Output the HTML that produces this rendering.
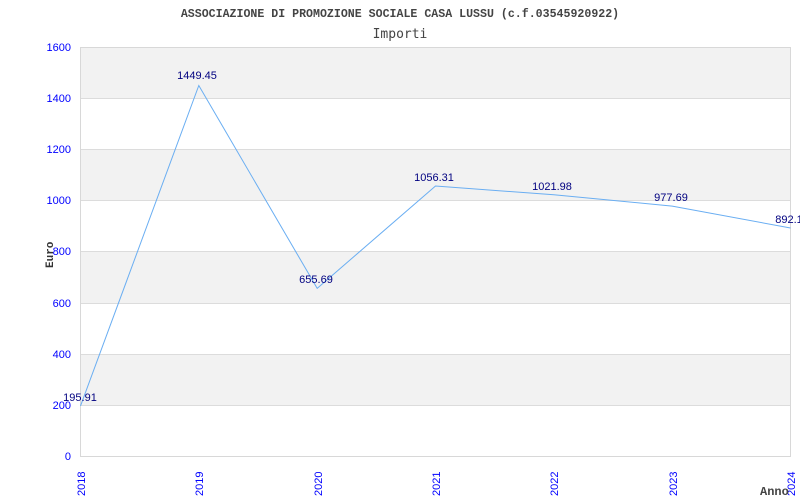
<!DOCTYPE html>
<html><head><meta charset="utf-8"><style>
html,body{margin:0;padding:0;background:#fff;width:800px;height:500px;overflow:hidden}
</style></head><body>
<svg width="800" height="500" xmlns="http://www.w3.org/2000/svg">
<rect x="0" y="0" width="800" height="500" fill="#fff"/>
<g fill="#f2f2f2">
<rect x="80.5" y="47" width="710" height="51"/>
<rect x="80.5" y="149" width="710" height="51"/>
<rect x="80.5" y="252" width="710" height="51"/>
<rect x="80.5" y="354" width="710" height="51"/>
</g>
<g stroke="#dcdcdc" stroke-width="1">
<line x1="80" y1="98.5" x2="790" y2="98.5"/>
<line x1="80" y1="149.5" x2="790" y2="149.5"/>
<line x1="80" y1="200.5" x2="790" y2="200.5"/>
<line x1="80" y1="251.5" x2="790" y2="251.5"/>
<line x1="80" y1="303.5" x2="790" y2="303.5"/>
<line x1="80" y1="354.5" x2="790" y2="354.5"/>
<line x1="80" y1="405.5" x2="790" y2="405.5"/>
<rect x="80.5" y="47.5" width="710" height="409" fill="none" stroke="#d8d8d8"/>
</g>
<polyline fill="none" stroke="#6aaef2" stroke-width="1" points="80.5,405.9 198.8,85.5 317.2,288.4 435.5,186 553.8,194.8 672.2,206.1 790.5,228"/>
<g font-family="'Liberation Sans',sans-serif" font-size="11" fill="#0000ff" text-anchor="end">
<text x="71" y="51">1600</text>
<text x="71" y="102">1400</text>
<text x="71" y="153">1200</text>
<text x="71" y="204">1000</text>
<text x="71" y="255">800</text>
<text x="71" y="307">600</text>
<text x="71" y="358">400</text>
<text x="71" y="409">200</text>
<text x="71" y="460">0</text>
</g>
<g font-family="'Liberation Sans',sans-serif" font-size="11" fill="#0000ff">
<text transform="translate(85,496) rotate(-90)">2018</text>
<text transform="translate(203,496) rotate(-90)">2019</text>
<text transform="translate(322,496) rotate(-90)">2020</text>
<text transform="translate(440,496) rotate(-90)">2021</text>
<text transform="translate(558,496) rotate(-90)">2022</text>
<text transform="translate(677,496) rotate(-90)">2023</text>
<text transform="translate(795,496) rotate(-90)">2024</text>
</g>
<g font-family="'Liberation Sans',sans-serif" font-size="11" fill="#000080" text-anchor="middle">
<text x="80" y="401">195.91</text>
<text x="197" y="79">1449.45</text>
<text x="316" y="283">655.69</text>
<text x="434" y="181">1056.31</text>
<text x="552" y="190">1021.98</text>
<text x="671" y="201">977.69</text>
<text x="789" y="223">892.1</text>
</g>
<text x="400" y="17" text-anchor="middle" font-family="'Liberation Mono',monospace" font-size="11.6" font-weight="bold" fill="#444">ASSOCIAZIONE DI PROMOZIONE SOCIALE CASA LUSSU (c.f.03545920922)</text>
<text x="400" y="38" text-anchor="middle" font-family="'DejaVu Sans Mono',monospace" font-size="13" fill="#444">Importi</text>
<text transform="translate(53,268) rotate(-90)" font-family="'Liberation Mono',monospace" font-size="11" font-weight="bold" fill="#333">Euro</text>
<text x="760" y="495" font-family="'Liberation Mono',monospace" font-size="12" font-weight="bold" fill="#444">Anno</text>
</svg>
</body></html>
